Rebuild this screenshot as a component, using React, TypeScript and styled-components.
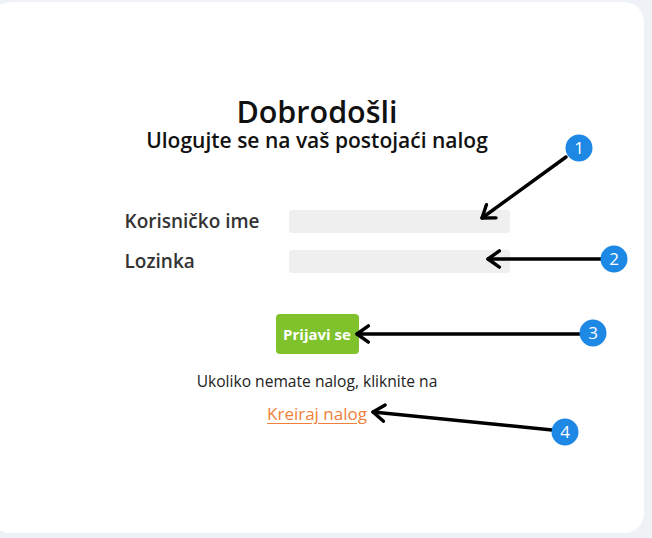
import React from "react";
import styled, { createGlobalStyle } from "styled-components";

const GlobalStyle = createGlobalStyle`
  html, body {
    margin: 0;
    padding: 0;
    background: #eef1f6;
    overflow: hidden;
  }
  body {
    font-family: "Open Sans", "Noto Sans", "DejaVu Sans", sans-serif;
    color: #111;
  }
`;

const Page = styled.div`
  position: relative;
  width: 652px;
  height: 538px;
  padding-top: 2px;
  box-sizing: border-box;
`;

const Card = styled.main`
  width: 654px;
  height: 531px;
  margin-left: -10px;
  background: #fff;
  border-radius: 20px;
  display: flex;
  flex-direction: column;
  align-items: center;
  padding-top: 93px;
  box-sizing: border-box;
`;

const Title = styled.h1`
  margin: 0;
  font-size: 30.5px;
  line-height: 32px;
  font-weight: 600;
  color: #111;
`;

const Subtitle = styled.h2`
  margin: 2px 0 0;
  font-size: 21px;
  line-height: 22px;
  font-weight: 600;
  color: #111;
`;

const Form = styled.form`
  margin-top: 59px;
  display: flex;
  flex-direction: column;
  align-items: center;
  gap: 17px;
`;

const Row = styled.div`
  display: flex;
  align-items: center;
  width: 385px;
  height: 23px;
`;

const Label = styled.label`
  width: 164px;
  font-size: 19px;
  font-weight: 600;
  color: #333;
  line-height: 23px;
`;

const Input = styled.input`
  width: 221px;
  height: 23px;
  border: none;
  border-radius: 3px;
  background: #efefef;
  padding: 0 6px;
  box-sizing: border-box;
  outline: none;
`;

const Button = styled.button`
  margin-top: 24px;
  width: 83px;
  height: 40px;
  border: none;
  border-radius: 4px;
  background: #80c22c;
  color: #fff;
  font-family: inherit;
  font-size: 15px;
  font-weight: 700;
  cursor: pointer;
`;

const Hint = styled.p`
  margin: 16px 0 0;
  font-size: 15.6px;
  line-height: 22px;
  color: #222;
`;

const Link = styled.a`
  margin-top: 11px;
  font-size: 17px;
  line-height: 22px;
  color: #f0813a;
  text-decoration: underline;
  text-underline-offset: 3px;
`;

const Overlay = styled.svg`
  position: absolute;
  left: 0;
  top: 0;
  pointer-events: none;
`;

type Ann = { n: number; cx: number; cy: number; sx: number; sy: number; tx: number; ty: number };

const anns: Ann[] = [
  { n: 1, cx: 579, cy: 148, sx: 566, sy: 157, tx: 482, ty: 218 },
  { n: 2, cx: 614, cy: 259, sx: 601, sy: 259, tx: 488, ty: 259 },
  { n: 3, cx: 593, cy: 333, sx: 580, sy: 334, tx: 357, ty: 334 },
  { n: 4, cx: 565, cy: 432, sx: 552, sy: 430, tx: 373, ty: 412 },
];

function head(a: Ann) {
  const ang = Math.atan2(a.sy - a.ty, a.sx - a.tx);
  const len = 14;
  const spread = 0.62;
  const p1 = [a.tx + len * Math.cos(ang + spread), a.ty + len * Math.sin(ang + spread)];
  const p2 = [a.tx + len * Math.cos(ang - spread), a.ty + len * Math.sin(ang - spread)];
  return `${p1[0]},${p1[1]} ${a.tx},${a.ty} ${p2[0]},${p2[1]}`;
}

export default function App() {
  return (
    <>
      <GlobalStyle />
      <Page>
        <Card>
          <Title>Dobrodošli</Title>
          <Subtitle>Ulogujte se na vaš postojaći nalog</Subtitle>
          <Form onSubmit={(e) => e.preventDefault()}>
            <Row>
              <Label>Korisničko ime</Label>
              <Input type="text" />
            </Row>
            <Row>
              <Label>Lozinka</Label>
              <Input type="password" />
            </Row>
            <Button type="submit">Prijavi se</Button>
          </Form>
          <Hint>Ukoliko nemate nalog, kliknite na</Hint>
          <Link href="#">Kreiraj nalog</Link>
        </Card>
        <Overlay width={652} height={538} viewBox="0 0 652 538">
          {anns.map((a) => (
            <g key={a.n}>
              <line x1={a.sx} y1={a.sy} x2={a.tx} y2={a.ty} stroke="#000" strokeWidth={3.4} strokeLinecap="round" />
              <polyline points={head(a)} fill="none" stroke="#000" strokeWidth={3.4} strokeLinecap="round" strokeLinejoin="round" />
              <circle cx={a.cx} cy={a.cy} r={13.5} fill="#1e88e5" />
              <text
                x={a.cx}
                y={a.cy + 6}
                textAnchor="middle"
                fill="#fff"
                fontSize={17}
                fontFamily="'Open Sans', 'DejaVu Sans', sans-serif"
              >
                {a.n}
              </text>
            </g>
          ))}
        </Overlay>
      </Page>
    </>
  );
}
